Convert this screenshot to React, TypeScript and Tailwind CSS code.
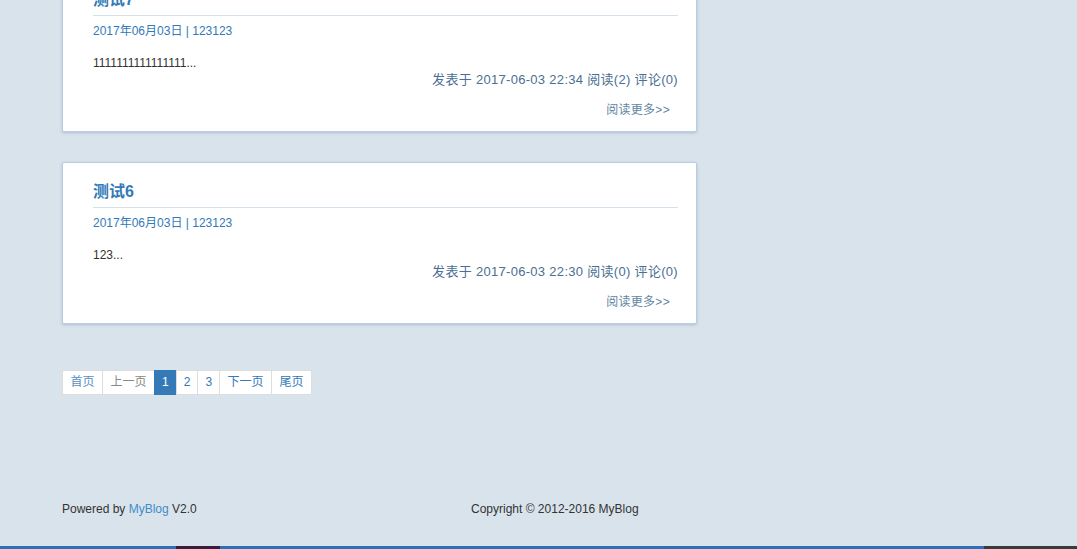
import React from 'react';

const posts = [
  { id: 7, title: '测试7', date: '2017年06月03日', author: '123123', summary: '1111111111111111...', time: '2017-06-03 22:34', reads: 2, comments: 0 },
  { id: 6, title: '测试6', date: '2017年06月03日', author: '123123', summary: '123...', time: '2017-06-03 22:30', reads: 0, comments: 0 },
];

const pages = [
  { label: '首页', cls: 'px-[7.5px] text-[#5b8fc4]' },
  { label: '上一页', cls: 'px-[7.5px] text-[#888]' },
  { label: '1', cls: 'px-[7px] text-white', active: true },
  { label: '2', cls: 'px-[7px] text-[#337ab7]' },
  { label: '3', cls: 'px-[7px] text-[#337ab7]' },
  { label: '下一页', cls: 'px-[7.5px] text-[#337ab7]' },
  { label: '尾页', cls: 'px-[7.5px] text-[#337ab7]' },
];

const PostCard = ({ post }: { post: (typeof posts)[number] }) => (
  <div className="w-[635px] bg-white border border-[#b9cde2] rounded-[2px] shadow-[0_1px_3px_rgba(90,120,160,0.35)] pl-[30px] pr-[18px] pt-[17px] pb-[12px]">
    <h2 className="h-[24px] leading-[24px] text-[16px] font-bold text-[#337ab7] pb-[3px] box-content border-b border-[#d6e0ea]">
      {post.title}
    </h2>
    <div className="mt-[5px] leading-[20px] text-[12px] text-[#337ab7]">
      {post.date} | {post.author}
    </div>
    <p className="mt-[14px] leading-[16px] text-[12px] text-[#333]">{post.summary}</p>
    <div className="text-right leading-[18px] text-[13px] text-[#4a6f92] tracking-[0.3px]">
      发表于 {post.time} 阅读({post.reads}) 评论({post.comments})
    </div>
    <div className="mt-[12px] pr-[8px] text-right leading-[18px] text-[12px] text-[#6384a3] tracking-[0.3px]">
      阅读更多&gt;&gt;
    </div>
  </div>
);

export default function App() {
  return (
    <div
      className="h-[549px] overflow-hidden flex flex-col bg-[#d9e3ec]"
      style={{ fontFamily: '"Liberation Sans", "Noto Sans CJK SC", sans-serif' }}
    >
      {/* Posts (page is scrolled, first card cut at top) */}
      <div className="pl-[62px] -mt-[30px] flex flex-col gap-[30px]">
        {posts.map((p) => (
          <PostCard key={p.id} post={p} />
        ))}
      </div>

      {/* Pagination */}
      <div className="pl-[62px] mt-[46px] flex">
        {pages.map((p, i) => (
          <span
            key={p.label}
            className={`h-[25px] leading-[23px] text-[12px] border ${
              p.active ? 'bg-[#337ab7] border-[#337ab7]' : 'bg-white border-[#dddddd]'
            } ${i > 0 ? '-ml-px' : ''} ${i === 0 ? 'rounded-l-[2px]' : ''} ${i === pages.length - 1 ? 'rounded-r-[2px]' : ''} ${p.cls}`}
          >
            {p.label}
          </span>
        ))}
      </div>

      {/* Footer */}
      <footer className="pl-[62px] mt-[104px] flex leading-[20px] text-[12px] text-[#333]">
        <div className="w-[409px]">
          Powered by <span className="text-[#428bca]">MyBlog</span> V2.0
        </div>
        <div>Copyright © 2012-2016 MyBlog</div>
      </footer>

      {/* Bottom strip */}
      <div className="mt-auto h-[3px] flex bg-[#2f6fb8]">
        <div className="w-[176px]" />
        <div className="w-[44px] bg-[#3a1d3a]" />
        <div className="flex-1" />
        <div className="w-[93px] bg-[#3a3a3a]" />
      </div>
    </div>
  );
}
